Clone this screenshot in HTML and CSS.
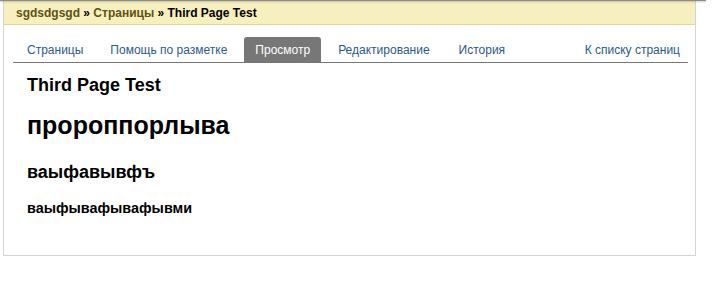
FILE: index.html
```html
<!DOCTYPE html>
<html lang="ru">
<head>
  <meta charset="UTF-8">
  <title>Third Page Test</title>
  <link rel="stylesheet" href="styles.css">
</head>
<body>
  <div class="topline"></div>
  <div class="page">
    <div class="crumbs">
      <a href="#">sgdsdgsgd</a> &raquo; <a href="#">Страницы</a> &raquo; <span>Third Page Test</span>
    </div>
    <div class="tabs">
      <a class="tab" href="#">Страницы</a>
      <a class="tab" href="#">Помощь по разметке</a>
      <a class="tab active" href="#">Просмотр</a>
      <a class="tab" href="#">Редактирование</a>
      <a class="tab" href="#">История</a>
      <a class="tab right" href="#">К списку страниц</a>
    </div>
    <div class="content">
      <h1>Third Page Test</h1>
      <h2>пророппорлыва</h2>
      <h3>ваыфавывфъ</h3>
      <h4>ваыфывафывафывми</h4>
    </div>
  </div>
</body>
</html>
```

FILE: styles.css
```css
body {
  margin: 0;
  background: #fff;
  color: #000;
  font-family: "Liberation Sans", Arial, sans-serif;
  font-size: 12px;
}
.topline {
  height: 1px;
  width: 706px;
  background: #8a8a8a;
  box-shadow: 0 1px 2px #0004;
  position: absolute;
  top: 0;
  left: 0;
}
.page {
  margin-left: 3px;
  width: 691px;
  height: 255px;
  border: 1px solid #cdd5de;
  border-top: none;
  box-sizing: content-box;
}
.crumbs {
  background: #f7efbe;
  border-bottom: 1px solid #e2d690;
  height: 24px;
  line-height: 26px;
  padding-left: 12px;
  font-weight: bold;
  font-size: 12px;
}
.crumbs a {
  color: #5e5313;
  text-decoration: none;
}
.tabs {
  display: flex;
  margin: 12px 7px 0 9px;
  border-bottom: 1px solid #777;
  height: 25px;
  white-space: nowrap;
}
.tab {
  padding: 0 14px 0 13px;
  line-height: 26px;
  color: #2b5a8c;
  text-decoration: none;
  border-radius: 3px 3px 0 0;
}
.tab:first-child {
  padding-left: 14px;
}
.tab.active {
  background: #777;
  color: #fff;
  padding: 0 11px;
  margin-left: 3px;
}
.tab.active + .tab {
  padding-left: 17px;
}
.tab.active + .tab + .tab {
  padding-left: 15px;
}
.tab.right {
  margin-left: auto;
  padding-right: 8px;
}
.content {
  padding: 9px 23px 0 23px;
}
.content h1,
.content h2,
.content h3,
.content h4 {
  margin: 0;
  font-weight: bold;
}
.content h1 {
  font-size: 18px;
  line-height: 26px;
}
.content h2 {
  font-size: 25px;
  margin-top: 13px;
}
.content h3 {
  font-size: 18px;
  margin-top: 22px;
}
.content h4 {
  font-size: 14.4px;
  margin-top: 17px;
}
```
